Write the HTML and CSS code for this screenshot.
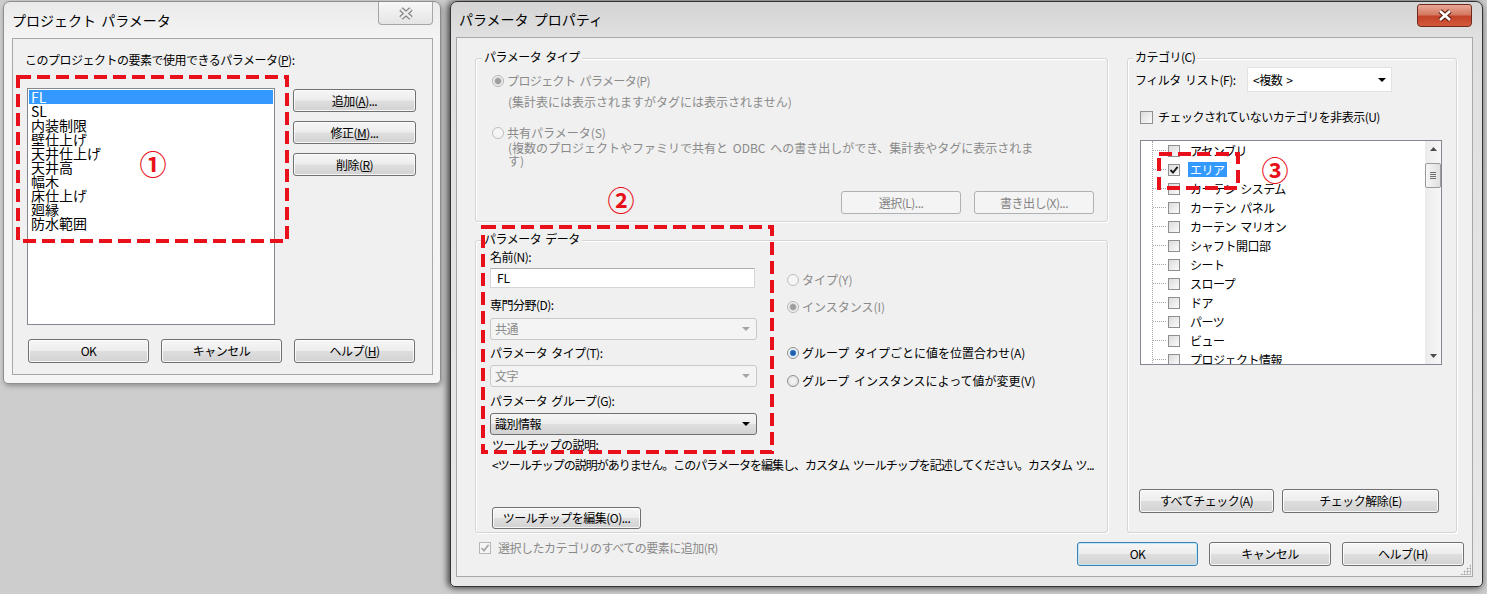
FILE: index.html
```html
<!DOCTYPE html>
<html lang="ja">
<head>
  <meta charset="UTF-8">
  <title>パラメータ プロパティ</title>
  <link rel="stylesheet" href="styles.css">
</head>
<body>
  <div class="desktop">

    <!-- project parameters dialog (inactive) -->
    <div class="win win-left">
      <div class="titlebar">
        <span class="title">プロジェクト パラメータ</span>
        <span class="close close-idle">
          <svg width="16" height="13" viewBox="0 0 16 13"><path d="M3 2l10 9M13 2L3 11" fill="none" stroke="#7d7d7d" stroke-width="5"/><path d="M3 2l10 9M13 2L3 11" fill="none" stroke="#ececec" stroke-width="2.4"/></svg>
        </span>
      </div>
      <div class="client client-left">
        <div class="lbl lbl-list">このプロジェクトの要素で使用できるパラメータ(<u>P</u>):</div>
        <div class="param-row">
          <div class="listbox">
            <div class="item selected">FL</div>
            <div class="item">SL</div>
            <div class="item">内装制限</div>
            <div class="item">壁仕上げ</div>
            <div class="item">天井仕上げ</div>
            <div class="item">天井高</div>
            <div class="item">幅木</div>
            <div class="item">床仕上げ</div>
            <div class="item">廻縁</div>
            <div class="item">防水範囲</div>
          </div>
          <div class="side-btns">
            <button class="btn">追加(<u>A</u>)...</button>
            <button class="btn">修正(<u>M</u>)...</button>
            <button class="btn">削除(<u>R</u>)</button>
          </div>
        </div>
        <div class="btn-row">
          <button class="btn">OK</button>
          <button class="btn">キャンセル</button>
          <button class="btn">ヘルプ(<u>H</u>)</button>
        </div>
      </div>
    </div>

    <!-- parameter properties dialog (active) -->
    <div class="win win-right">
      <div class="titlebar">
        <span class="title">パラメータ プロパティ</span>
        <span class="close close-active">
          <svg width="16" height="13" viewBox="0 0 16 13"><path d="M3 2l10 9M13 2L3 11" fill="none" stroke="#5a1d12" stroke-width="5"/><path d="M3 2l10 9M13 2L3 11" fill="none" stroke="#fff" stroke-width="2.6"/></svg>
        </span>
      </div>
      <div class="client client-right">
        <div class="main">
          <div class="col-left">
            <div class="group group-type">
              <div class="group-title">パラメータ タイプ</div>
              <div class="opt off type-project"><i class="rb rb-dim-on"></i>プロジェクト パラメータ(P)</div>
              <div class="note off note-project">(集計表には表示されますがタグには表示されません)</div>
              <div class="opt off type-shared"><i class="rb rb-dim"></i>共有パラメータ(S)</div>
              <div class="note off note-shared">(複数のプロジェクトやファミリで共有と ODBC への書き出しができ、集計表やタグに表示されま<br>す)</div>
              <div class="group-btns">
                <button class="btn btn-off">選択(L)...</button>
                <button class="btn btn-off">書き出し(X)...</button>
              </div>
            </div>

            <div class="group group-data">
              <div class="group-title">パラメータ データ</div>
              <div class="fields">
                <div class="field-col">
                  <div class="lbl">名前(N):</div>
                  <div class="textbox">FL</div>
                  <div class="lbl lbl-disc">専門分野(D):</div>
                  <div class="combo combo-off combo-disc">共通<svg width="8" height="4" viewBox="0 0 8 4"><path d="M0 0h8L4 4z" fill="currentColor"/></svg></div>
                  <div class="lbl lbl-ptype">パラメータ タイプ(T):</div>
                  <div class="combo combo-off combo-ptype">文字<svg width="8" height="4" viewBox="0 0 8 4"><path d="M0 0h8L4 4z" fill="currentColor"/></svg></div>
                  <div class="lbl lbl-pgroup">パラメータ グループ(G):</div>
                  <div class="combo combo-on combo-pgroup">識別情報<svg width="8" height="4" viewBox="0 0 8 4"><path d="M0 0h8L4 4z" fill="currentColor"/></svg></div>
                </div>
                <div class="opt-col">
                  <div class="opt off opt-type"><i class="rb rb-dim"></i>タイプ(Y)</div>
                  <div class="opt off opt-inst"><i class="rb rb-dim-on"></i>インスタンス(I)</div>
                  <div class="opt opt-align"><i class="rb rb-on"></i>グループ タイプごとに値を位置合わせ(A)</div>
                  <div class="opt opt-vary"><i class="rb"></i>グループ インスタンスによって値が変更(V)</div>
                </div>
              </div>
              <div class="lbl tip-lbl">ツールチップの説明:</div>
              <div class="tip-text">&lt;ツールチップの説明がありません。このパラメータを編集し、カスタム ツールチップを記述してください。カスタム ツ...</div>
              <button class="btn btn-tip">ツールチップを編集(O)...</button>
            </div>
          </div>

          <div class="group group-cat">
            <div class="group-title">カテゴリ(C)</div>
            <div class="filter-row">
              <span class="filter-lbl">フィルタ リスト(F):</span>
              <div class="combo combo-white">&lt;複数 &gt;<svg width="8" height="4" viewBox="0 0 8 4"><path d="M0 0h8L4 4z" fill="currentColor"/></svg></div>
            </div>
            <div class="chk-row hide-row"><i class="cb"></i>チェックされていないカテゴリを非表示(U)</div>
            <div class="tree">
              <div class="tree-items">
                <div class="node"><i class="cb"></i><span>アセンブリ</span></div>
                <div class="node"><i class="cb"><svg width="10" height="10" viewBox="0 0 10 10"><path d="M1.5 5l2.5 2.6L8.6 1.8" fill="none" stroke="#1a1a1a" stroke-width="1.9"/></svg></i><span class="picked">エリア</span></div>
                <div class="node"><i class="cb"></i><span>カーテン システム</span></div>
                <div class="node"><i class="cb"></i><span>カーテン パネル</span></div>
                <div class="node"><i class="cb"></i><span>カーテン マリオン</span></div>
                <div class="node"><i class="cb"></i><span>シャフト開口部</span></div>
                <div class="node"><i class="cb"></i><span>シート</span></div>
                <div class="node"><i class="cb"></i><span>スロープ</span></div>
                <div class="node"><i class="cb"></i><span>ドア</span></div>
                <div class="node"><i class="cb"></i><span>パーツ</span></div>
                <div class="node"><i class="cb"></i><span>ビュー</span></div>
                <div class="node"><i class="cb"></i><span>プロジェクト情報</span></div>
              </div>
              <div class="vscroll">
                <div class="sb-arrow"><svg width="7" height="4" viewBox="0 0 7 4"><path d="M0 4L3.5 0 7 4z" fill="#4d4d4d"/></svg></div>
                <div class="sb-track"><div class="sb-thumb"></div></div>
                <div class="sb-arrow"><svg width="7" height="4" viewBox="0 0 7 4"><path d="M0 0h7L3.5 4z" fill="#4d4d4d"/></svg></div>
              </div>
            </div>
            <div class="cat-btns">
              <button class="btn btn-all">すべてチェック(A)</button>
              <button class="btn btn-none">チェック解除(E)</button>
            </div>
          </div>
        </div>

        <div class="footer">
          <div class="chk-row off add-row"><i class="cb cb-off"><svg width="10" height="10" viewBox="0 0 10 10"><path d="M1.5 5l2.5 2.6L8.6 1.8" fill="none" stroke="#a8a8a8" stroke-width="1.8"/></svg></i>選択したカテゴリのすべての要素に追加(R)</div>
          <div class="dlg-btns">
            <button class="btn btn-default">OK</button>
            <button class="btn">キャンセル</button>
            <button class="btn">ヘルプ(H)</button>
          </div>
        </div>
        <div class="grip"></div>
      </div>
    </div>

    <!-- red annotations -->
    <div class="mark mark-1"><svg width="273" height="168"><rect x="2" y="2" width="269" height="164" fill="none" stroke="#e8101a" stroke-width="4" stroke-dasharray="13 6"/></svg></div>
    <div class="mark mark-2"><svg width="293" height="229"><rect x="2" y="2" width="289" height="225" fill="none" stroke="#e8101a" stroke-width="4" stroke-dasharray="13 6"/></svg></div>
    <div class="mark mark-3"><svg width="83" height="38"><rect x="2" y="2" width="79" height="34" fill="none" stroke="#e8101a" stroke-width="4" stroke-dasharray="13 6"/></svg></div>
    <div class="num num-1">①</div>
    <div class="num num-2">②</div>
    <div class="num num-3">③</div>
  </div>
</body>
</html>
```

FILE: styles.css
```css
html, body {
  margin: 0;
  padding: 0;
  background: #cdcdcd;
}
.desktop {
  position: relative;
  width: 1487px;
  height: 594px;
  overflow: hidden;
  background: #cdcdcd;
  font-family: "Noto Sans CJK JP", "Noto Sans", sans-serif;
  font-size: 12px;
  line-height: 16px;
  letter-spacing: -0.5px;
  word-spacing: 2px;
  color: #000;
}
u {
  text-underline-offset: 1px;
}

/* window frames */
.win {
  position: absolute;
  box-sizing: border-box;
  display: flex;
  flex-direction: column;
  border: 1px solid;
  border-radius: 7px 7px 5px 5px;
}
.win-left {
  left: 3px;
  top: 1px;
  width: 438px;
  height: 383px;
  padding: 0 7px 8px 8px;
  border-color: #8f8f8f;
  background: linear-gradient(#eaeaea, #f4f4f4 36px, #f5f5f5);
  box-shadow: 1px 2px 5px rgba(0, 0, 0, 0.3);
}
.win-right {
  left: 450px;
  top: 1px;
  width: 1033px;
  height: 586px;
  padding: 0 9px 9px 5px;
  border-color: #333;
  background: linear-gradient(#d4d4d4, #e0e0e0 35px, #e8e8e8);
  box-shadow: -3px 0 6px rgba(0, 0, 0, 0.5), 0 2px 6px rgba(0, 0, 0, 0.35);
}
.titlebar {
  flex: none;
  display: flex;
  justify-content: space-between;
  align-items: flex-start;
}
.win-left .titlebar { height: 36px; }
.win-right .titlebar { height: 35px; }
.title {
  font-size: 14px;
  letter-spacing: 0;
  line-height: 36px;
  white-space: nowrap;
}
.win-right .title {
  line-height: 35px;
  padding-left: 3px;
}
.close {
  box-sizing: border-box;
  width: 55px;
  height: 23px;
  display: flex;
  align-items: center;
  justify-content: center;
  border: 1px solid;
  border-top: none;
  border-radius: 0 0 4px 4px;
}
.close-idle {
  border-color: #a5a5a5;
  background: linear-gradient(#f8f8f8, #e4e4e4);
}
.close-active {
  margin: 2px 1px 0 0;
  border: 1px solid #6e2a1c;
  border-radius: 3px 3px 4px 4px;
  background: linear-gradient(#e9a796, #d57a63 45%, #c4432a 55%, #d4583c);
}
.client {
  flex: 1;
  min-height: 0;
  border: 1px solid #a8a8a8;
  background: #f0f0f0;
}

/* buttons */
.btn {
  box-sizing: border-box;
  margin: 0;
  padding: 0;
  font: inherit;
  letter-spacing: inherit;
  word-spacing: inherit;
  color: #000;
  border: 1px solid #707070;
  border-radius: 3px;
  background: linear-gradient(#f6f6f6, #ededed 48%, #dedede 52%, #d2d2d2);
  box-shadow: inset 0 0 0 1px rgba(255, 255, 255, 0.8);
  white-space: nowrap;
}
.btn-off {
  border-color: #adb2b5;
  background: #f4f4f4;
  color: #838383;
  box-shadow: none;
}
.btn-default {
  border-color: #3c7fb1;
  box-shadow: inset 0 0 0 1px #bfe6fa;
}

/* left dialog */
.client-left {
  padding: 13px 0 0 14px;
}
.lbl-list {
  margin-left: -2px;
}
.param-row {
  display: flex;
  margin-top: 20px;
}
.listbox {
  box-sizing: border-box;
  width: 248px;
  height: 237px;
  padding: 1px;
  border: 1px solid #828790;
  background: #fff;
  overflow: hidden;
}
.item {
  height: 14px;
  padding-left: 2px;
  font-size: 14px;
  line-height: 14px;
  letter-spacing: 0;
  white-space: nowrap;
}
.item.selected {
  background: #3399ff;
  color: #fff;
}
.side-btns {
  display: flex;
  flex-direction: column;
  gap: 9px;
  margin: 1px 0 0 18px;
}
.side-btns .btn {
  width: 123px;
  height: 23px;
}
.btn-row {
  display: flex;
  gap: 12px;
  margin: 14px 0 0 1px;
}
.btn-row .btn {
  width: 121px;
  height: 24px;
}

/* right dialog */
.client-right {
  position: relative;
  display: flex;
  flex-direction: column;
  padding: 20px 0 0 18px;
}
.main {
  display: flex;
  gap: 19px;
  height: 475px;
}
.col-left {
  width: 633px;
  display: flex;
  flex-direction: column;
  gap: 18px;
}
.group {
  box-sizing: border-box;
  display: flex;
  flex-direction: column;
  border: 1px solid #d5d5d5;
  border-radius: 3px;
  box-shadow: inset 1px 1px 0 #fff, 1px 1px 0 #fff;
}
.group-type { height: 164px; }
.group-data { height: 293px; }
.group-cat {
  width: 330px;
  height: 475px;
}
.group-title {
  align-self: flex-start;
  margin: -10px 0 0 6px;
  padding: 0 2px;
  background: #f0f0f0;
  white-space: nowrap;
}
.group-cat .group-title {
  margin-left: 5px;
}
.off {
  color: #8a8a8a;
}
.opt {
  display: flex;
  align-items: center;
  gap: 3px;
  white-space: nowrap;
  letter-spacing: 0;
}
.note {
  margin-left: 32px;
  white-space: nowrap;
  letter-spacing: 0;
}
.type-project {
  margin: 8px 0 0 16px;
  letter-spacing: -0.6px;
}
.note-project { margin-top: 5px; }
.type-shared { margin: 15px 0 0 16px; }
.note-shared { line-height: 13px; }
.group-btns {
  align-self: flex-end;
  display: flex;
  gap: 13px;
  margin: auto 13px 7px 0;
}
.group-btns .btn {
  width: 120px;
  height: 23px;
}

.fields {
  display: flex;
  margin: 2px 0 0 14px;
}
.field-col {
  width: 267px;
  display: flex;
  flex-direction: column;
  align-items: flex-start;
}
.textbox {
  box-sizing: border-box;
  width: 265px;
  height: 20px;
  margin-top: 3px;
  padding-left: 6px;
  border: 1px solid #d3d6db;
  border-top-color: #abadb3;
  background: #fff;
  line-height: 18px;
  letter-spacing: 0;
}
.lbl-disc { margin-top: 9px; }
.lbl-ptype { margin-top: 5px; }
.lbl-pgroup { margin-top: 6px; }
.combo {
  box-sizing: border-box;
  display: flex;
  align-items: center;
  justify-content: space-between;
  width: 267px;
  height: 22px;
  padding: 0 6px 0 4px;
  border: 1px solid;
  border-radius: 3px;
  white-space: nowrap;
}
.combo-disc { margin-top: 5px; }
.combo-ptype,
.combo-pgroup { margin-top: 4px; }
.combo-off {
  border-color: #c8c8c8;
  background: #f4f4f4;
  color: #8a8a8a;
}
.combo-off svg { color: #a5a5a5; }
.combo-on {
  border-color: #707070;
  background: linear-gradient(#f6f6f6, #ededed 48%, #dedede 52%, #d2d2d2);
}
.combo-white {
  width: 145px;
  height: 25px;
  padding: 0 5px 0 5px;
  border-color: #e2e2e2;
  border-radius: 0;
  background: #fff;
}
.opt-col {
  display: flex;
  flex-direction: column;
  margin-left: 30px;
}
.opt-type { margin-top: 23px; }
.opt-inst { margin-top: 11px; }
.opt-align { margin-top: 30px; }
.opt-vary { margin-top: 12px; }
.tip-lbl { margin: 2px 0 0 16px; }
.tip-text {
  margin: 4px 0 0 16px;
  letter-spacing: -1px;
  white-space: nowrap;
}
.btn-tip {
  align-self: flex-start;
  width: 149px;
  height: 22px;
  margin: 34px 0 0 16px;
}

/* categories */
.filter-row {
  display: flex;
  align-items: center;
  margin: 2px 0 0 7px;
}
.filter-lbl {
  width: 112px;
  white-space: nowrap;
}
.chk-row {
  display: flex;
  align-items: center;
  gap: 5px;
  white-space: nowrap;
}
.hide-row { margin: 17px 0 0 12px; }
.cb {
  box-sizing: border-box;
  flex: none;
  display: inline-flex;
  align-items: center;
  justify-content: center;
  width: 13px;
  height: 13px;
  border: 1px solid #8e8f8f;
  background: linear-gradient(135deg, #dcdcdc, #fbfbfb);
}
.cb-off {
  width: 12px;
  height: 12px;
  border-color: #b6b6b6;
  background: #f6f6f6;
}
.rb {
  box-sizing: border-box;
  flex: none;
  width: 12px;
  height: 12px;
  border: 1px solid #8e8f8f;
  border-radius: 50%;
  background: radial-gradient(circle, #f7f7f7, #dcdcdc);
}
.rb-on {
  background: radial-gradient(circle, #1f5fa8 0 2px, #5d9be0 3px, #e9f1fa 3.6px, #f4f4f4);
}
.rb-dim {
  border-color: #bdbdbd;
  background: #f5f5f5;
}
.rb-dim-on {
  border-color: #b4b4b4;
  background: radial-gradient(circle, #9e9e9e 0 2.4px, #c8c8c8 3.4px, #f2f2f2 4px);
}
.tree {
  box-sizing: border-box;
  display: flex;
  width: 302px;
  height: 225px;
  margin: 15px 0 0 12px;
  border: 1px solid #828790;
  background: #fff;
  overflow: hidden;
}
.tree-items {
  flex: 1;
  align-self: flex-start;
  margin-left: 11px;
  border-left: 1px dotted #a5a5a5;
}
.node {
  display: flex;
  align-items: center;
  height: 19px;
  white-space: nowrap;
}
.node::before {
  content: "";
  width: 13px;
  border-top: 1px dotted #a5a5a5;
}
.node .cb {
  width: 12px;
  height: 12px;
  margin-left: 2px;
}
.node span {
  margin-left: 8px;
  padding: 0 2px;
  line-height: 15px;
}
.node .picked {
  background: #3399ff;
  color: #fff;
}
.vscroll {
  width: 16px;
  display: flex;
  flex-direction: column;
  background: linear-gradient(to right, #ebebeb, #f7f7f7);
}
.sb-arrow {
  height: 16px;
  display: flex;
  align-items: center;
  justify-content: center;
}
.sb-track { flex: 1; }
.sb-thumb {
  box-sizing: border-box;
  height: 25px;
  margin-top: 6px;
  display: flex;
  align-items: center;
  justify-content: center;
  border: 1px solid #9a9a9a;
  border-radius: 2px;
  background: linear-gradient(to right, #f5f5f5, #e0e0e0);
}
.sb-thumb::after {
  content: "";
  width: 6px;
  height: 7px;
  background: repeating-linear-gradient(#6e6e6e 0 1px, transparent 1px 2px);
}
.cat-btns {
  display: flex;
  gap: 8px;
  margin: auto 0 19px 11px;
}
.btn-all { width: 135px; height: 24px; }
.btn-none { width: 157px; height: 24px; }

/* footer */
.footer {
  display: flex;
  justify-content: space-between;
  align-items: flex-start;
  margin-top: 8px;
  padding: 0 8px 0 4px;
}
.add-row {
  gap: 7px;
  line-height: 13px;
}
.dlg-btns {
  display: flex;
  gap: 11px;
  margin-top: 1px;
}
.dlg-btns .btn {
  width: 122px;
  height: 24px;
}
.dlg-btns .btn-default { width: 121px; }
.grip {
  position: absolute;
  right: 1px;
  bottom: 1px;
  width: 11px;
  height: 11px;
  background: radial-gradient(circle, #aaa 0.8px, transparent 1.3px) 0 0 / 3px 3px;
  clip-path: polygon(100% 0, 100% 100%, 0 100%);
}

/* annotations */
.mark {
  position: absolute;
}
.mark svg { display: block; }
.mark-1 { left: 16px; top: 75px; }
.mark-2 { left: 481px; top: 225px; }
.mark-3 { left: 1157px; top: 152px; }
.num {
  position: absolute;
  width: 28px;
  height: 28px;
  display: flex;
  align-items: center;
  justify-content: center;
  color: #e8101a;
  font-size: 27px;
  font-weight: 700;
  line-height: 1;
  letter-spacing: 0;
}
.num-1 { left: 139px; top: 149px; }
.num-2 { left: 607px; top: 185px; }
.num-3 { left: 1261px; top: 155px; }
```
